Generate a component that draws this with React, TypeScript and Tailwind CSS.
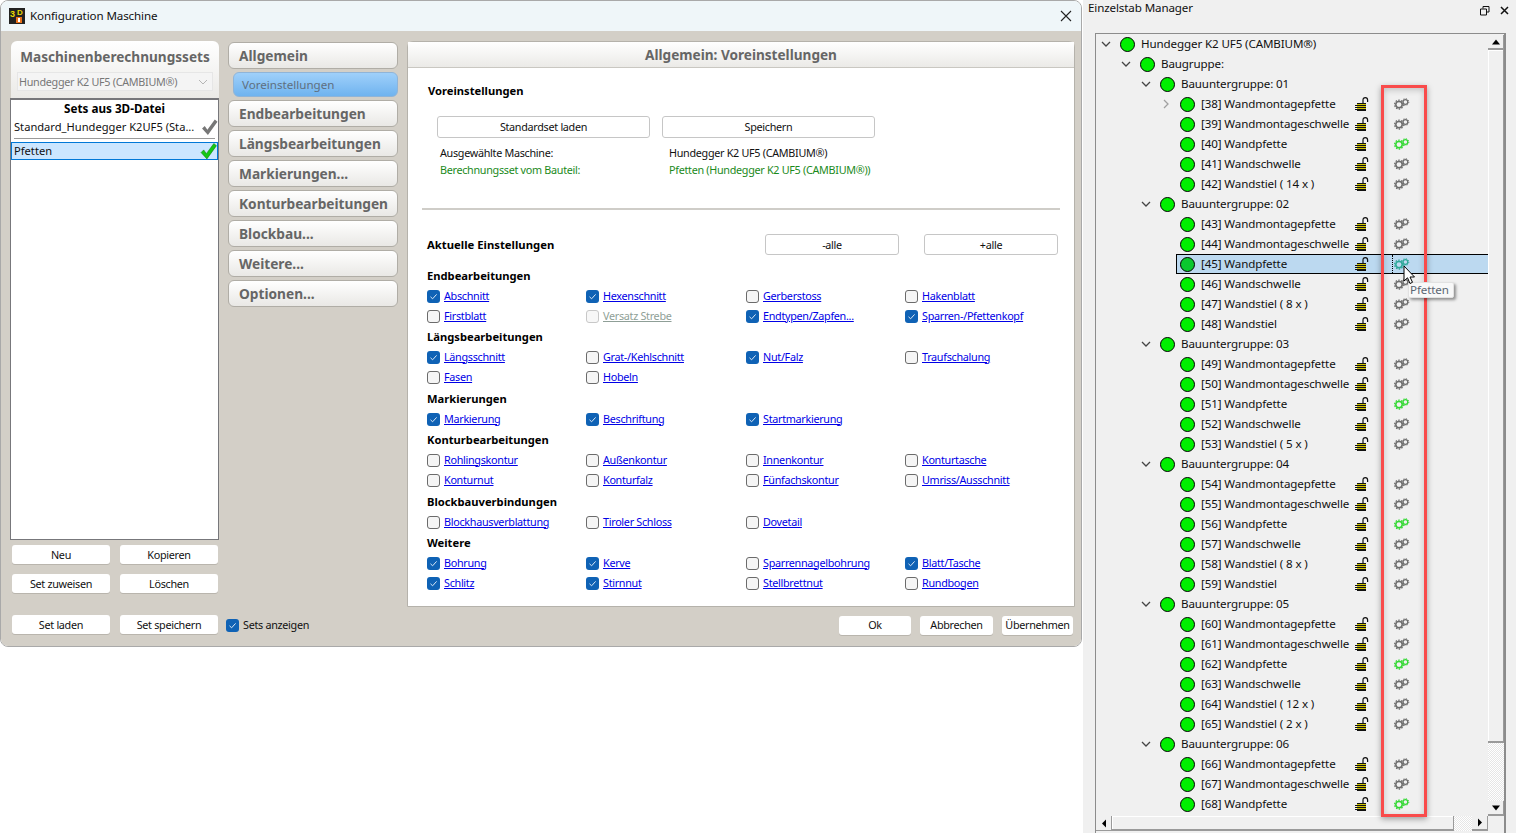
import React from "react";

function Check({ on, disabled }: { on?: boolean; disabled?: boolean }) {
  if (on)
    return (
      <span className="w-[13px] h-[13px] rounded-[3px] bg-[#0f62b5] flex items-center justify-center shrink-0">
        <svg width="9" height="9" viewBox="0 0 9 9"><path d="M1.5 4.8 L3.6 6.8 L7.6 2.4" fill="none" stroke="#dbe9f7" strokeWidth="1" /></svg>
      </span>
    );
  return <span className={"w-[13px] h-[13px] rounded-[3px] shrink-0 border " + (disabled ? "border-[#c8c8c8] bg-[#f7f7f7]" : "border-[#6b6b6b] bg-[#f5f5f5]")} />;
}

type Item = [string, boolean?, boolean?] | null;

function Section({ title, rows, mb }: { title: string; rows: Item[][]; mb: string }) {
  return (
    <div className={mb}>
      <div className="h-5 flex items-center font-bold text-[11.2px] tracking-[0px] text-black">{title}</div>
      {rows.map((r, i) => (
        <div key={i} className="h-5 grid grid-cols-[159px_160px_159px_170px] items-center">
          {r.map((it, j) =>
            it ? (
              <div key={j} className="flex items-center gap-[4px]">
                <Check on={it[1]} disabled={it[2]} />
                <span className={"underline whitespace-nowrap " + (it[2] ? "text-[#8f9f97]" : "text-[#0000e6]")}>{it[0]}</span>
              </div>
            ) : (
              <div key={j} />
            )
          )}
        </div>
      ))}
    </div>
  );
}

function SmallBtn({ children, w }: { children: React.ReactNode; w: string }) {
  return <div className={w + " h-[19px] pt-[1px] bg-white rounded-[3px] flex items-center justify-center text-[#111] shadow-[0_1px_0_#b9b5ad]"}>{children}</div>;
}

function OutBtn({ children, w, h }: { children: React.ReactNode; w: string; h: string }) {
  return <div className={w + " " + h + " pt-[1px] bg-white rounded-[3px] border border-[#c6c6c6] flex items-center justify-center text-[#111]"}>{children}</div>;
}

function Nav({ children }: { children: React.ReactNode }) {
  return (
    <div className="h-[27px] rounded-[6px] border border-[#b0ada6] bg-gradient-to-b from-white to-[#e9e8e5] flex items-center pl-[10px] font-bold text-[13.7px] tracking-[0px] text-[#666]">
      {children}
    </div>
  );
}

function Gears({ color }: { color: string }) {
  return (
    <svg width="16" height="12" viewBox="0 0 16 12">
      <circle cx="5" cy="6.6" r="3.2" fill="none" stroke={color} strokeWidth="1.5" />
      <circle cx="5" cy="6.6" r="4.4" fill="none" stroke={color} strokeWidth="1.3" strokeDasharray="1.5 1.27" />
      <circle cx="11.4" cy="4" r="2.4" fill="none" stroke={color} strokeWidth="1.3" />
      <circle cx="11.4" cy="4" r="3.4" fill="none" stroke={color} strokeWidth="1" strokeDasharray="1.2 1.47" />
    </svg>
  );
}

function Lock() {
  return (
    <svg width="14" height="14" viewBox="0 0 14 14">
      <path d="M8 6 V3 Q8 0.7 10.3 0.7 Q12.6 0.7 12.6 3 V5" fill="none" stroke="#111" strokeWidth="1.2" />
      <rect x="2" y="6" width="9" height="8" fill="#111" />
      <rect x="2" y="7" width="9" height="1" fill="#cfc400" />
      <rect x="2" y="9" width="9" height="1" fill="#cfc400" />
      <rect x="2" y="11" width="9" height="1" fill="#cfc400" />
      <rect x="0" y="8" width="2" height="1" fill="#111" />
      <rect x="0" y="10" width="2" height="1" fill="#111" />
      <rect x="0" y="12" width="2" height="1" fill="#111" />
    </svg>
  );
}

function Chevron({ open, gray }: { open: boolean; gray?: boolean }) {
  return (
    <svg width="10" height="10" viewBox="0 0 10 10" className="shrink-0">
      <path d={open ? "M1 3 L5 7 L9 3" : "M3 1 L7 5 L3 9"} fill="none" stroke={gray ? "#a0a0a0" : "#444"} strokeWidth="1.3" />
    </svg>
  );
}

type Leaf = { n: number; t: string; g?: boolean; sel?: boolean };
const S = "Wandmontageschwelle";
const P = "Wandmontagepfette";
const W = "Wandpfette";
const C = "Wandschwelle";
const groups: [string, Leaf[]][] = [
  ["01", [{ n: 38, t: P }, { n: 39, t: S }, { n: 40, t: W, g: true }, { n: 41, t: C }, { n: 42, t: "Wandstiel ( 14 x )" }]],
  ["02", [{ n: 43, t: P }, { n: 44, t: S }, { n: 45, t: W, sel: true }, { n: 46, t: C }, { n: 47, t: "Wandstiel ( 8 x )" }, { n: 48, t: "Wandstiel" }]],
  ["03", [{ n: 49, t: P }, { n: 50, t: S }, { n: 51, t: W, g: true }, { n: 52, t: C }, { n: 53, t: "Wandstiel ( 5 x )" }]],
  ["04", [{ n: 54, t: P }, { n: 55, t: S }, { n: 56, t: W, g: true }, { n: 57, t: C }, { n: 58, t: "Wandstiel ( 8 x )" }, { n: 59, t: "Wandstiel" }]],
  ["05", [{ n: 60, t: P }, { n: 61, t: S }, { n: 62, t: W, g: true }, { n: 63, t: C }, { n: 64, t: "Wandstiel ( 12 x )" }, { n: 65, t: "Wandstiel ( 2 x )" }]],
  ["06", [{ n: 66, t: P }, { n: 67, t: S }, { n: 68, t: W, g: true }]],
];

function Dot({ dark }: { dark?: boolean }) {
  return <span className={"block w-[15px] h-[15px] rounded-full border border-black shrink-0 " + (dark ? "bg-[#0bc82f]" : "bg-[#00f000]")} />;
}

function Branch({ label, pad }: { label: string; pad: string }) {
  return (
    <div className={"h-5 flex items-center " + pad}>
      <Chevron open />
      <span className="ml-[9px] flex shrink-0"><Dot /></span>
      <span className="ml-[6px] whitespace-nowrap text-[#111]">{label}</span>
    </div>
  );
}

function LeafRow({ l }: { l: Leaf }) {
  return (
    <div className="h-5 flex items-center pl-[65px]">
      <div className={"w-[15px] flex shrink-0 " + (l.n === 38 ? "" : "invisible")}>
        <Chevron open={false} gray />
      </div>
      <div className={"h-full flex items-center flex-1 min-w-0 pl-[3px] " + (l.sel ? "bg-[#bcd9f0] border-y border-l border-black" : "border border-transparent")}>
        <Dot dark={l.sel} />
        <span className="ml-[6px] w-[154px] shrink-0 whitespace-nowrap text-[#111]">[{l.n}] {l.t}</span>
        <span className="w-[14px] shrink-0 flex"><Lock /></span>
        <span className={"ml-[23px] w-[20px] h-full flex items-center shrink-0 " + (l.sel ? "border-l border-dotted border-black" : "border-l border-transparent")}>
          <span className="ml-[1px] flex"><Gears color={l.sel ? "#2fa89a" : l.g ? "#35d835" : "#6e6e6e"} /></span>
        </span>
      </div>
    </div>
  );
}

const dither = "bg-[repeating-conic-gradient(#ffffff_0_25%,#e6e6e6_0_50%)] bg-[length:2px_2px]";

function ScrollBtn({ d }: { d: string }) {
  return (
    <div className="w-[16px] h-[15px] bg-[#f0f0f0] border-b-2 border-r border-[#9a9a9a] flex items-center justify-center shrink-0">
      <svg width="10" height="8" viewBox="0 0 10 8"><path d={d} fill="#000" /></svg>
    </div>
  );
}

export default function App() {
  return (
    <div className="relative flex w-[1516px] h-[833px] overflow-hidden bg-white font-['Noto_Sans',sans-serif] text-[11.6px] tracking-[-0.12px] leading-none text-[#111]">
      {/* Config window */}
      <div className="w-[1082px] h-[647px] shrink-0 rounded-[8px] border border-[#a9a9a9] flex flex-col overflow-hidden">
        <div className="h-[30px] shrink-0 bg-[#eff6f9] flex items-center pl-[8px] pr-[9px]">
          <svg width="16" height="16" viewBox="0 0 16 16" className="shrink-0">
            <rect width="16" height="16" fill="#222" />
            <text x="1" y="9" fontSize="9" fontWeight="700" fill="#e8d800" fontFamily="Liberation Sans">3</text>
            <text x="8" y="7" fontSize="8" fontWeight="700" fill="#e8d800" fontFamily="Liberation Sans">D</text>
            <rect x="7" y="9" width="6" height="6" fill="#e8701a" />
            <rect x="9" y="10" width="2" height="4" fill="#fff" />
          </svg>
          <span className="ml-[5px] text-[#111]">Konfiguration Maschine</span>
          <svg width="12" height="12" viewBox="0 0 12 12" className="ml-auto">
            <path d="M1 1 L11 11 M11 1 L1 11" stroke="#222" strokeWidth="1.1" />
          </svg>
        </div>
        <div className="flex-1 bg-[#d3cfc7] pl-[10px] pt-[10px] flex flex-col text-[10.8px] tracking-[-0.3px]">
          <div className="flex gap-[9px] h-[566px]">
            {/* Left column */}
            <div className="w-[208px] flex flex-col">
              <div className="h-[57px] rounded-t-[6px] bg-gradient-to-b from-white to-[#ebeae7] flex flex-col items-center">
                <div className="h-[31px] flex items-center font-bold text-[13.6px] tracking-[0px] text-[#666] whitespace-nowrap">Maschinenberechnungssets</div>
                <div className="w-[196px] h-[19px] pt-[1px] bg-[#f4f4f4] border border-[#e6e6e6] flex items-center justify-between px-[1px] text-[#777] whitespace-nowrap">
                  <span>Hundegger K2 UF5 (CAMBIUM®)</span>
                  <span className="mr-[3px] flex"><svg width="10" height="6" viewBox="0 0 10 6"><path d="M1 1 L5 5 L9 1" fill="none" stroke="#b5b5b5" /></svg></span>
                </div>
              </div>
              <div className="h-[442px] w-[209px] -ml-[1px] bg-white border border-[#77777b] border-t-2 flex flex-col text-[11.15px] tracking-[0px]">
                <div className="h-[18px] flex items-center justify-center font-bold text-black text-[11.7px]">Sets aus 3D-Datei</div>
                <div className="h-[18px] flex items-center justify-between pl-[3px] whitespace-nowrap">
                  <span>Standard_Hundegger K2UF5 (Sta...</span>
                  <svg width="17" height="17" viewBox="0 0 16 16" className="shrink-0"><path d="M1 9 L3.5 6.5 L6 10 L13 0.5 L15.5 2.5 L6.5 15 Z" fill="#777" /></svg>
                </div>
                <div className="h-[1px] bg-[#999] mx-[3px] mt-[2px]" />
                <div className="mt-[3px] h-[18px] bg-[#cbe6ff] border border-[#0078d7] flex items-center justify-between pl-[2px]">
                  <span>Pfetten</span>
                  <svg width="17" height="17" viewBox="0 0 16 16" className="shrink-0"><path d="M1 9 L3.5 6.5 L6 10 L13 0.5 L15.5 2.5 L6.5 15 Z" fill="#14c814" stroke="#0a7a0a" strokeWidth="0.5" /></svg>
                </div>
              </div>
              <div className="mt-[5px] flex gap-[10px] pl-[1px]">
                <SmallBtn w="w-[98px]">Neu</SmallBtn>
                <SmallBtn w="w-[98px]">Kopieren</SmallBtn>
              </div>
              <div className="mt-[10px] flex gap-[10px] pl-[1px]">
                <SmallBtn w="w-[98px]">Set zuweisen</SmallBtn>
                <SmallBtn w="w-[98px]">Löschen</SmallBtn>
              </div>
            </div>
            {/* Nav column */}
            <div className="w-[170px] flex flex-col gap-[3px] pt-[1px]">
              <Nav>Allgemein</Nav>
              <div className="ml-[5px] h-[25px] rounded-[6px] border border-[#8fb4d8] bg-gradient-to-b from-[#9fd0fa] to-[#6fb3ef] flex items-center pl-[8px] text-[11.6px] tracking-[0px] text-[#5f6f80]">Voreinstellungen</div>
              <Nav>Endbearbeitungen</Nav>
              <Nav>Längsbearbeitungen</Nav>
              <Nav>Markierungen...</Nav>
              <Nav>Konturbearbeitungen</Nav>
              <Nav>Blockbau...</Nav>
              <Nav>Weitere...</Nav>
              <Nav>Optionen...</Nav>
            </div>
            {/* Main panel */}
            <div className="w-[668px] bg-white rounded-t-[6px] border border-[#b5b2ab] flex flex-col">
              <div className="h-[26px] shrink-0 bg-gradient-to-b from-white to-[#ebeae7] border-b border-[#c9c7c1] flex items-center justify-center font-bold text-[13.6px] tracking-[0px] text-[#666]">Allgemein: Voreinstellungen</div>
              <div className="flex flex-col">
                <div className="pl-[20px] mt-[16px] h-[14px] flex items-center font-bold text-[11.2px] tracking-[0px] text-black">Voreinstellungen</div>
                <div className="pl-[29px] mt-[18px] flex gap-[12px]">
                  <OutBtn w="w-[213px]" h="h-[22px]">Standardset laden</OutBtn>
                  <OutBtn w="w-[213px]" h="h-[22px]">Speichern</OutBtn>
                </div>
                <div className="pl-[32px] mt-[7px] h-[16px] flex items-center">
                  <span className="w-[229px]">Ausgewählte Maschine:</span>
                  <span>Hundegger K2 UF5 (CAMBIUM®)</span>
                </div>
                <div className="pl-[32px] mt-[1px] h-[16px] flex items-center text-[#1b8a1b]">
                  <span className="w-[229px]">Berechnungsset vom Bauteil:</span>
                  <span>Pfetten (Hundegger K2 UF5 (CAMBIUM®))</span>
                </div>
                <div className="ml-[14px] w-[638px] h-[2px] bg-[#cfcdc8] mt-[30px]" />
                <div className="pl-[19px] mt-[24px] flex items-center h-[21px]">
                  <span className="w-[338px] font-bold text-[11.3px] tracking-[0px] text-black">Aktuelle Einstellungen</span>
                  <OutBtn w="w-[134px]" h="h-[21px]">-alle</OutBtn>
                  <span className="w-[25px]" />
                  <OutBtn w="w-[134px]" h="h-[21px]">+alle</OutBtn>
                </div>
                <div className="pl-[19px] mt-[11px] flex flex-col">
                  <Section mb="mb-[1px]" title="Endbearbeitungen" rows={[
                    [["Abschnitt", true], ["Hexenschnitt", true], ["Gerberstoss"], ["Hakenblatt"]],
                    [["Firstblatt"], ["Versatz Strebe", false, true], ["Endtypen/Zapfen...", true], ["Sparren-/Pfettenkopf", true]],
                  ]} />
                  <Section mb="mb-[2px]" title="Längsbearbeitungen" rows={[
                    [["Längsschnitt", true], ["Grat-/Kehlschnitt"], ["Nut/Falz", true], ["Traufschalung"]],
                    [["Fasen"], ["Hobeln"], null, null],
                  ]} />
                  <Section mb="mb-[1px]" title="Markierungen" rows={[
                    [["Markierung", true], ["Beschriftung", true], ["Startmarkierung", true], null],
                  ]} />
                  <Section mb="mb-[2px]" title="Konturbearbeitungen" rows={[
                    [["Rohlingskontur"], ["Außenkontur"], ["Innenkontur"], ["Konturtasche"]],
                    [["Konturnut"], ["Konturfalz"], ["Fünfachskontur"], ["Umriss/Ausschnitt"]],
                  ]} />
                  <Section mb="mb-[1px]" title="Blockbauverbindungen" rows={[
                    [["Blockhausverblattung"], ["Tiroler Schloss"], ["Dovetail"], null],
                  ]} />
                  <Section mb="mb-0" title="Weitere" rows={[
                    [["Bohrung", true], ["Kerve", true], ["Sparrennagelbohrung"], ["Blatt/Tasche", true]],
                    [["Schlitz", true], ["Stirnnut", true], ["Stellbrettnut"], ["Rundbogen"]],
                  ]} />
                </div>
              </div>
            </div>
          </div>
          {/* Bottom row */}
          <div className="mt-[8px] flex items-center h-[19px] pl-[1px]">
            <SmallBtn w="w-[98px]">Set laden</SmallBtn>
            <span className="w-[10px]" />
            <SmallBtn w="w-[98px]">Set speichern</SmallBtn>
            <span className="ml-[8px] flex mt-[1px]"><Check on /></span>
            <span className="ml-[4px] mt-[2px]">Sets anzeigen</span>
            <div className="ml-auto mr-[8px] flex gap-[9px] mt-[1px]">
              <SmallBtn w="w-[72px]">Ok</SmallBtn>
              <SmallBtn w="w-[73px]">Abbrechen</SmallBtn>
              <SmallBtn w="w-[71px]">Übernehmen</SmallBtn>
            </div>
          </div>
        </div>
      </div>

      {/* Right panel */}
      <div className="ml-[1px] flex-1 h-full bg-[#f0f0f0] flex flex-col">
        <div className="h-[33px] shrink-0 flex pl-[5px] pr-[7px]">
          <span className="mt-[1px] h-[14px] flex items-center">Einzelstab Manager</span>
          <svg width="10" height="10" viewBox="0 0 10 10" className="ml-auto mr-[10px] mt-[6px]">
            <path d="M3 2.5 V0.5 H9 V6 H7 M0.5 3 H6.5 V9 H0.5 Z" fill="none" stroke="#111" />
          </svg>
          <svg width="9" height="9" viewBox="0 0 9 9" className="mt-[6px]">
            <path d="M1 1 L8 8 M8 1 L1 8" stroke="#111" strokeWidth="1.5" />
          </svg>
        </div>
        <div className="ml-[12px] mr-[10px] flex-1 border-l border-t border-r-2 border-[#8c8c8c] flex flex-col min-h-0">
          <div className="flex-1 flex min-h-0">
            <div className="flex-1 min-w-0 overflow-hidden">
              <Branch label="Hundegger K2 UF5 (CAMBIUM®)" pad="pl-[5px]" />
              <Branch label="Baugruppe:" pad="pl-[25px]" />
              {groups.map(([g, ls]) => (
                <React.Fragment key={g}>
                  <Branch label={"Bauuntergruppe: " + g} pad="pl-[45px]" />
                  {ls.map((l) => <LeafRow key={l.n} l={l} />)}
                </React.Fragment>
              ))}
            </div>
            <div className="w-[16px] shrink-0 flex flex-col pt-[1px]">
              <ScrollBtn d="M5 1.5 L9 6.5 H1 Z" />
              <div className="h-[693px] bg-[#f0f0f0] border-b-2 border-r border-[#9a9a9a] shadow-[inset_1px_1px_0_#fff]" />
              <div className={"flex-1 " + dither} />
              <ScrollBtn d="M5 6.5 L1 1.5 H9 Z" />
            </div>
          </div>
          <div className="h-[17px] shrink-0 flex">
            <div className="w-[392px] flex">
              <div className="w-[16px] h-[15px] border-b border-r border-[#9a9a9a] flex items-center justify-center">
                <svg width="6" height="9" viewBox="0 0 6 9"><path d="M5 0.5 V8.5 L1 4.5 Z" fill="#000" /></svg>
              </div>
              <div className="w-[342px] h-[15px] border-b-2 border-r border-[#9a9a9a] shadow-[inset_1px_1px_0_#fff]" />
              <div className={"flex-1 h-[15px] " + dither} />
              <div className="w-[16px] h-[15px] border-b-2 border-r border-[#9a9a9a] flex items-center justify-center shrink-0">
                <svg width="6" height="9" viewBox="0 0 6 9"><path d="M1 0.5 V8.5 L5 4.5 Z" fill="#000" /></svg>
              </div>
            </div>
          </div>
        </div>
      </div>

      {/* Red annotation */}
      <div className="absolute left-[1381px] top-[85px] w-[46px] h-[732px] border-[3px] border-[#f94b4b] shadow-[0_2px_6px_rgba(0,0,0,0.35),inset_0_2px_6px_rgba(0,0,0,0.2)] pointer-events-none" />
      {/* Tooltip */}
      <div className="absolute left-[1408px] top-[282px] h-[16px] w-[46px] bg-[#f8f8f8] border border-[#e2e2e2] rounded-[2px] shadow-[2px_2px_3px_rgba(0,0,0,0.4)] flex items-center pl-[1px] text-[#5b6673]">Pfetten</div>
      {/* Cursor */}
      <svg width="13" height="20" viewBox="0 0 13 20" className="absolute left-[1403px] top-[265px]">
        <path d="M1 1 V16 L4.5 12.8 L7 18.5 L9.5 17.3 L7 12 H11.5 Z" fill="#fff" stroke="#000" strokeWidth="1" />
      </svg>
    </div>
  );
}
